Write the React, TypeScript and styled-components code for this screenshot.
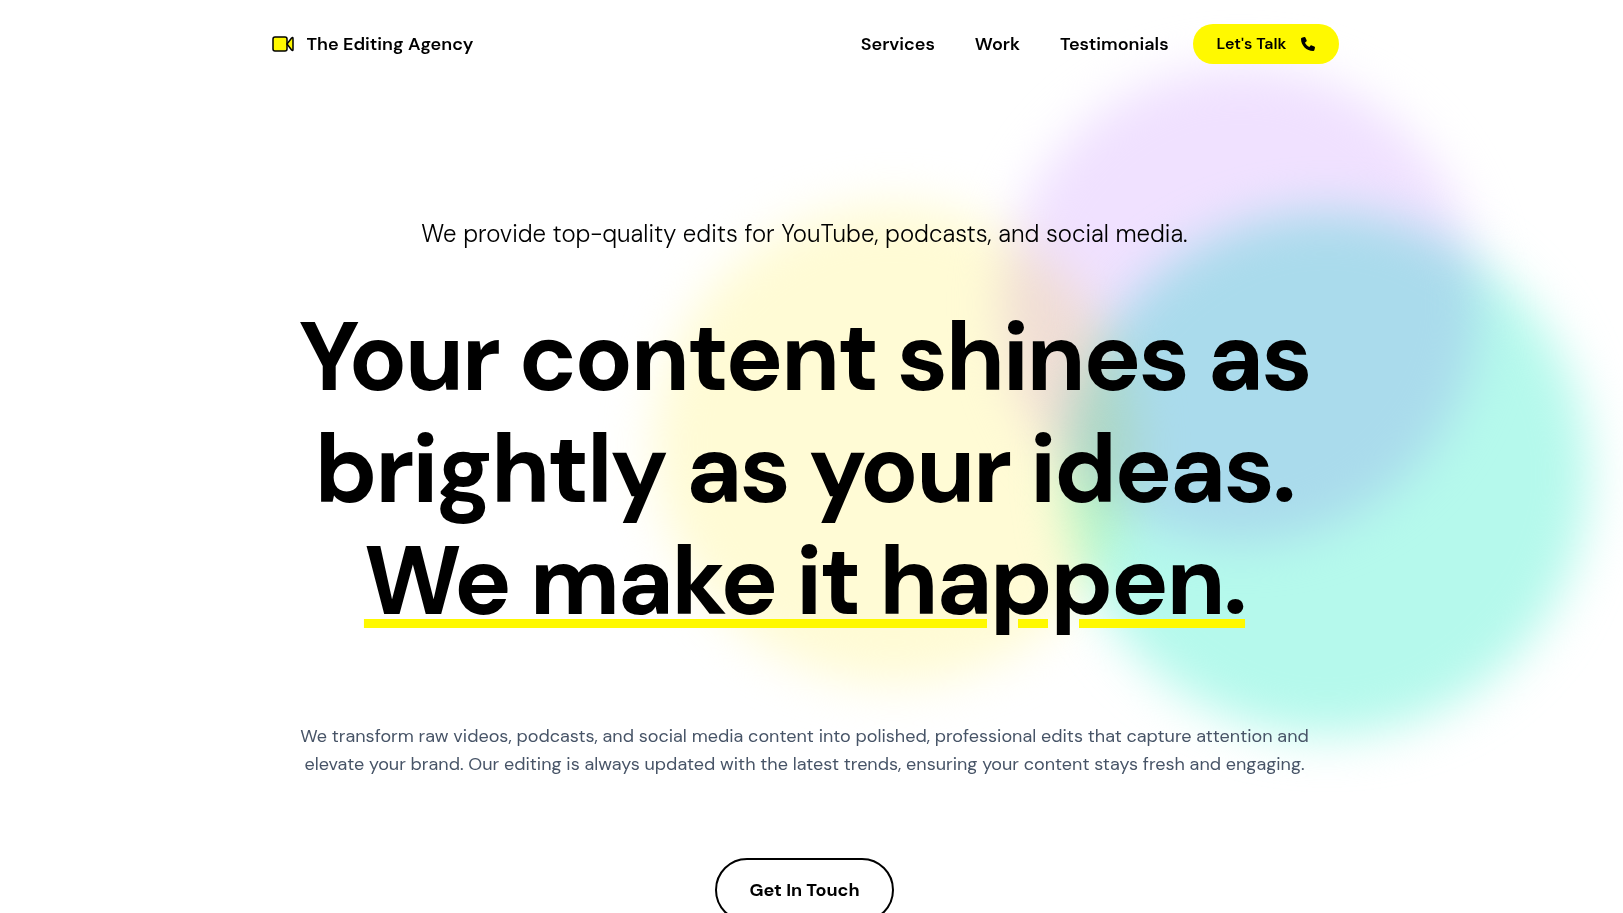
import React from 'react';
import styled, { createGlobalStyle } from 'styled-components';
import { FaPhone } from 'react-icons/fa6';

const GlobalStyle = createGlobalStyle`
  *, *::before, *::after { box-sizing: border-box; }
  body {
    margin: 0;
    background: #fff;
    color: #000;
    font-family: 'DM Sans', Inter, 'Liberation Sans', sans-serif;
    overflow-x: hidden;
  }
`;

const Page = styled.div`
  position: relative;
  min-height: 100vh;
  padding-right: 14px;
  overflow: hidden;
`;

const Header = styled.header`
  position: relative;
  z-index: 1;
  display: flex;
  align-items: center;
  justify-content: space-between;
  max-width: 1152px;
  margin: 0 auto;
  padding: 24px 42px 24px 43px;
`;

const Brand = styled.a`
  display: flex;
  align-items: center;
  gap: 12px;
  color: inherit;
  font-size: 18px;
  font-weight: 600;
  line-height: 28px;
  text-decoration: none;
`;

const Nav = styled.nav`
  display: flex;
  align-items: center;
  gap: 24px;
`;

const NavLinks = styled.div`
  display: flex;
  gap: 40px;
`;

const NavLink = styled.a`
  color: inherit;
  font-size: 18px;
  font-weight: 600;
  line-height: 28px;
  text-decoration: none;
`;

const TalkButton = styled.button`
  display: flex;
  align-items: center;
  gap: 14px;
  height: 40px;
  padding: 0 24px 1px;
  border: 0;
  border-radius: 20px;
  background: #fff900;
  color: #000;
  font-family: inherit;
  font-size: 16px;
  font-weight: 600;
  cursor: pointer;
`;

const Hero = styled.main`
  position: relative;
  max-width: 1152px;
  margin: 0 auto;
  padding: 130px 40px 80px;
  text-align: center;
`;

const Content = styled.div`
  position: relative;
  display: flex;
  flex-direction: column;
  align-items: center;
`;

const Blob = styled.div<{ $color: string; $size: number; $x: number; $y: number }>`
  position: absolute;
  left: ${(p) => p.$x}px;
  top: ${(p) => p.$y}px;
  width: ${(p) => p.$size}px;
  height: ${(p) => p.$size}px;
  border-radius: 50%;
  background: ${(p) => p.$color};
  filter: blur(24px);
  mix-blend-mode: multiply;
`;

const Tagline = styled.p`
  margin: 0 0 52px;
  font-size: 24px;
  font-weight: 300;
  line-height: 32px;
`;

const Title = styled.h1`
  margin: 0 0 84px;
  font-size: 96px;
  font-weight: 700;
  letter-spacing: -0.025em;
  line-height: 112px;
`;

const TitleLine = styled.span`
  display: block;
`;

const Underlined = styled.span`
  text-decoration: underline #fff900 9px;
  text-underline-offset: 5px;
`;

const Description = styled.p`
  margin: 0 0 80px;
  color: #475467;
  font-size: 18px;
  line-height: 28px;
`;

const ContactButton = styled.button`
  height: 64px;
  padding: 0 32px;
  border: 2px solid #000;
  border-radius: 32px;
  background: #fff;
  color: #000;
  font-family: inherit;
  font-size: 18px;
  font-weight: 700;
  cursor: pointer;
`;

function CameraIcon() {
  return (
    <svg width="23" height="18" viewBox="0 0 23 18" fill="#fff900" stroke="#000" strokeWidth="1.5" strokeLinejoin="round" aria-hidden="true">
      <rect x="1" y="2" width="14" height="14" rx="2" />
      <path d="M15 9l4.600-6q1.400-1.400 1.400.4v11.200q0 1.800-1.400.4z" />
    </svg>
  );
}

export default function App() {
  return (
    <Page>
      <GlobalStyle />
      <Header>
        <Brand href="#">
          <CameraIcon />
          The Editing Agency
        </Brand>
        <Nav>
          <NavLinks>
            <NavLink href="#services">Services</NavLink>
            <NavLink href="#work">Work</NavLink>
            <NavLink href="#testimonials">Testimonials</NavLink>
          </NavLinks>
          <TalkButton type="button">
            Let's Talk
            <FaPhone size={14} aria-hidden="true" />
          </TalkButton>
        </Nav>
      </Header>
      <Hero>
        <Blob $color="#fffbd5" $size={480} $x={425} $y={116} />
        <Blob $color="#f0e1ff" $size={476} $x={774} $y={-22} />
        <Blob $color="#b5f9ec" $size={524} $x={836} $y={124} />
        <Content>
          <Tagline>We provide top-quality edits for YouTube, podcasts, and social media.</Tagline>
          <Title>
            <TitleLine>Your content shines as</TitleLine>
            <TitleLine>brightly as your ideas.</TitleLine>
            <TitleLine>
              <Underlined>We make it happen.</Underlined>
            </TitleLine>
          </Title>
          <Description>
            We transform raw videos, podcasts, and social media content into polished, professional edits that capture attention and
            elevate your brand. Our editing is always updated with the latest trends, ensuring your content stays fresh and engaging.
          </Description>
          <ContactButton type="button">Get In Touch</ContactButton>
        </Content>
      </Hero>
    </Page>
  );
}
